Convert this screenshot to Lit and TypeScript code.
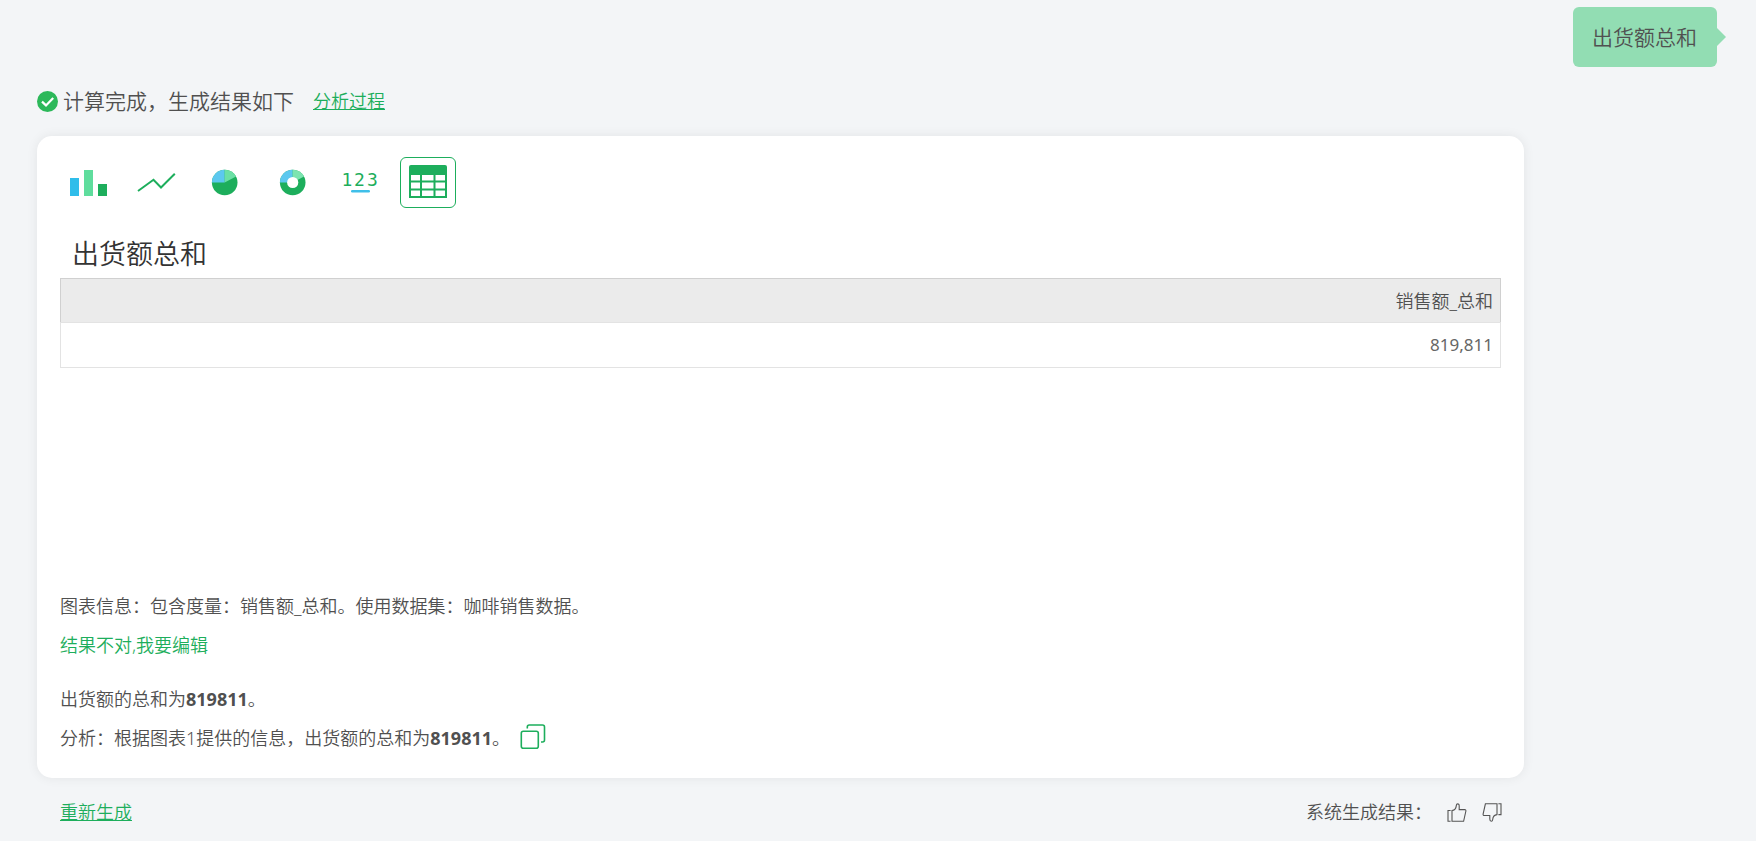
import { LitElement, html, css, svg } from "lit";
import { customElement, state } from "lit/decorators.js";

const chartTypes = [
  {
    id: "bar",
    label: "柱状图",
    art: svg`<rect x="10" y="21" width="9" height="18" fill="#2fbdea"/><rect x="24" y="13" width="9" height="26" fill="#5fdd9d"/><rect x="38" y="27" width="9" height="12" fill="#1dae5c"/>`,
  },
  {
    id: "line",
    label: "折线图",
    art: svg`<path d="M10 34 25.5 22.8 33 30.5 46.8 16.8" fill="none" stroke="#1dae5c" stroke-width="2"/>`,
  },
  {
    id: "pie",
    label: "饼图",
    art: svg`<circle cx="28.7" cy="25.5" r="12.8" fill="#1dae5c"/><path d="M28.7 25.5H15.9A12.8 12.8 0 0 1 28.7 12.7Z" fill="#5cc8ef"/><path d="M28.7 25.5V12.7A12.8 12.8 0 0 1 40 19.5Z" fill="#6be0a5"/>`,
  },
  {
    id: "donut",
    label: "环形图",
    art: svg`<circle cx="28.7" cy="25.5" r="12.8" fill="#1dae5c"/><path d="M28.7 25.5H15.9A12.8 12.8 0 0 1 28.7 12.7Z" fill="#5cc8ef"/><path d="M28.7 25.5V12.7A12.8 12.8 0 0 1 40 19.5Z" fill="#7ce4b0"/><circle cx="28.7" cy="25.5" r="5.6" fill="#fff"/>`,
  },
  {
    id: "kpi",
    label: "指标卡",
    art: svg`<text x="15 27.5 40.5" y="29" text-anchor="middle" class="digits">123</text><rect x="19" y="33" width="19" height="2.4" rx="1.2" fill="#3fbfe9"/>`,
  },
  {
    id: "table",
    label: "表格",
    art: svg`<path d="M9 18V10a2 2 0 0 1 2-2H45a2 2 0 0 1 2 2V18Z" fill="#1dae5c"/><path d="M10 17V40H46V17M10 24.5H46M10 32.5H46M21 17V40M34.5 17V40" fill="none" stroke="#1dae5c" stroke-width="2"/>`,
  },
];

@customElement("app-root")
export class AppRoot extends LitElement {
  @state() private active = "table";

  static styles = css`
    :host {
      display: block;
      min-height: 100vh;
      box-sizing: border-box;
      padding: 7px 39px 0 37px;
      background: #f3f5f7;
      color: #505050;
      font-family: "Noto Sans", "Noto Sans CJK SC", sans-serif;
      font-size: 18px;
      font-weight: 350;
      line-height: 39px;
    }
    button {
      padding: 0;
      border: 0;
      background: none;
      font: inherit;
      color: inherit;
      cursor: pointer;
    }
    svg {
      display: block;
    }
    a {
      color: #1dae5c;
    }
    .question {
      display: flex;
      justify-content: flex-end;
    }
    .bubble {
      position: relative;
      padding: 0 20px 0 19px;
      border-radius: 6px;
      background: #92ddb3;
      font-size: 21px;
      line-height: 60px;
    }
    .bubble::after {
      content: "";
      position: absolute;
      left: 100%;
      top: 21px;
      border: 9px solid transparent;
      border-left-color: #92ddb3;
      border-right: 0;
    }
    .status {
      display: flex;
      align-items: center;
      gap: 5px;
      height: 69px;
      font-size: 21px;
    }
    .status a {
      margin-left: 14px;
      font-size: 18px;
    }
    .card {
      margin-right: 193px;
      padding: 21px 23px 20px;
      border-radius: 15px;
      background: #fff;
      box-shadow: 0 0 12px rgba(0, 0, 0, 0.07);
    }
    .types {
      display: flex;
      gap: 12px;
    }
    .types button {
      box-sizing: border-box;
      border: 1px solid transparent;
      border-radius: 6px;
    }
    .types button[aria-pressed="true"] {
      border-color: #1dae5c;
    }
    .types svg {
      margin: -1px;
    }
    .digits {
      font: 18px "DejaVu Sans Mono", monospace;
      fill: #1dae5c;
    }
    h1 {
      margin: 26px 0 5px 12px;
      color: #333;
      font-size: 27px;
      font-weight: 350;
      line-height: 39px;
    }
    .chart {
      min-height: 309px;
    }
    table {
      width: 100%;
      border-collapse: collapse;
    }
    th,
    td {
      height: 44px;
      padding: 0 7px;
      border: 1px solid #e3e3e3;
      text-align: right;
      font-weight: 350;
      line-height: 24px;
      box-sizing: border-box;
    }
    th {
      border-color: #d0d0d0 #d0d0d0 #e3e3e3;
      background: #ebebeb;
    }
    td {
      height: 45px;
      color: #666;
      font-size: 17px;
      font-weight: 400;
    }
    p {
      margin: 0;
    }
    .edit {
      display: block;
      color: #1dae5c;
    }
    .answer {
      margin-top: 15px;
    }
    .answer p {
      display: flex;
      align-items: center;
    }
    b {
      font-weight: 700;
    }
    .copy {
      margin-left: 10px;
      padding-bottom: 4px;
    }
    .footer {
      display: flex;
      align-items: center;
      gap: 15px;
      margin-right: 193px;
      padding: 15px 22px 8px 23px;
    }
    .footer a {
      margin-right: auto;
    }
  `;

  render() {
    return html`
      <div class="question"><div class="bubble">出货额总和</div></div>
      <div class="status">
        <svg width="21" height="21" viewBox="0 0 21 21">
          <circle cx="10.5" cy="10.5" r="10.5" fill="#2cb85a" />
          <path d="M5 10.6 9 14.4 16.2 7" fill="none" stroke="#fff" stroke-width="2.2" />
        </svg>
        <span>计算完成，生成结果如下</span>
        <a href="#process">分析过程</a>
      </div>
      <section class="card">
        <div class="types">
          ${chartTypes.map(
            (t) => html`<button
              type="button"
              aria-label=${t.label}
              aria-pressed=${this.active === t.id ? "true" : "false"}
              @click=${() => (this.active = t.id)}
            >
              <svg width="56" height="51" viewBox="0 0 56 51">${t.art}</svg>
            </button>`
          )}
        </div>
        <h1>出货额总和</h1>
        <div class="chart">
          <table>
            <thead>
              <tr><th scope="col">销售额_总和</th></tr>
            </thead>
            <tbody>
              <tr><td>819,811</td></tr>
            </tbody>
          </table>
        </div>
        <p>图表信息：包含度量：销售额_总和。使用数据集：咖啡销售数据。</p>
        <button type="button" class="edit">结果不对,我要编辑</button>
        <div class="answer">
          <p>出货额的总和为<b>819811</b>。</p>
          <p>
            分析：根据图表1提供的信息，出货额的总和为<b>819811</b>。
            <button type="button" class="copy" aria-label="复制">
              <svg width="26" height="26" viewBox="0 0 26 26" fill="none" stroke="#1dae5c" stroke-width="1.6">
                <rect x="1.3" y="7.3" width="17" height="17" rx="2" />
                <path d="M7.3 4.5V3a2 2 0 0 1 2-2H22.5a2 2 0 0 1 2 2V16a2 2 0 0 1-2 2H21" />
              </svg>
            </button>
          </p>
        </div>
      </section>
      <div class="footer">
        <a href="#regenerate">重新生成</a>
        <span>系统生成结果：</span>
        <button type="button" aria-label="赞">
          <svg width="20" height="20" viewBox="0 0 20 20" fill="none" stroke="#555" stroke-width="1.1">
            <path d="M3.6 7.5H1V18.3H3.6M5 7.5V18.3H16.6L18.9 8C19 7.2 18.6 6.6 17.8 6.6H12.2V3C12.2 1.6 11.6.9 10.7.9S9.4 1.4 9.3 2.6C9.1 5 7.4 7.3 5 7.5Z" />
          </svg>
        </button>
        <button type="button" aria-label="踩">
          <svg width="20" height="20" viewBox="0 0 20 20" fill="none" stroke="#555" stroke-width="1.1">
            <path d="M16.4 .8H19V11.6H16.4M15 11.6V.8H3.4L1.1 11.1C1 11.9 1.4 12.5 2.2 12.5H7.8V16.1C7.8 17.5 8.4 18.2 9.3 18.2S10.6 17.7 10.7 16.5C10.9 14.1 12.6 11.8 15 11.6Z" />
          </svg>
        </button>
      </div>
    `;
  }
}
